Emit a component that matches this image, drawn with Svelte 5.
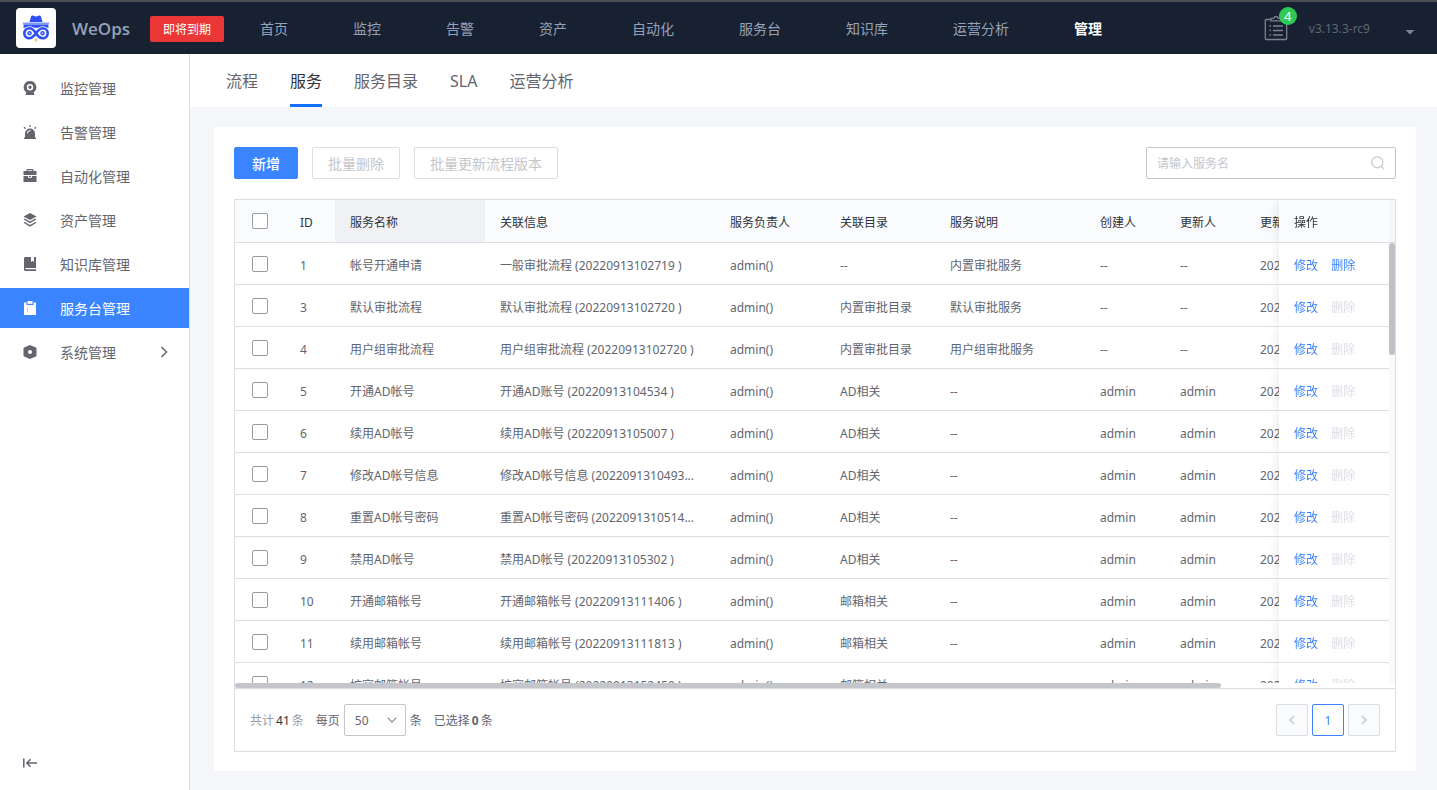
<script>
    const navItems = ["首页", "监控", "告警", "资产", "自动化", "服务台", "知识库", "运营分析", "管理"];
    const tabs = ["流程", "服务", "服务目录", "SLA", "运营分析"];
    const menus = [
        { icon: "monitor", name: "监控管理" },
        { icon: "alarm", name: "告警管理" },
        { icon: "auto", name: "自动化管理" },
        { icon: "asset", name: "资产管理" },
        { icon: "book", name: "知识库管理" },
        { icon: "desk", name: "服务台管理" },
        { icon: "system", name: "系统管理", children: true }
    ];

    let activeNav = "管理";
    let activeTab = "服务";
    let activeMenu = "服务台管理";
    let keyword = "";
    let pageSize = 50;
    let selected = [];

    const rows = [
        { id: 1, name: "帐号开通申请", flow: "一般审批流程 (20220913102719 )", catalog: "--", desc: "内置审批服务", user: "--", removable: true },
        { id: 3, name: "默认审批流程", flow: "默认审批流程 (20220913102720 )", catalog: "内置审批目录", desc: "默认审批服务", user: "--" },
        { id: 4, name: "用户组审批流程", flow: "用户组审批流程 (20220913102720 )", catalog: "内置审批目录", desc: "用户组审批服务", user: "--" },
        { id: 5, name: "开通AD帐号", flow: "开通AD账号 (20220913104534 )", catalog: "AD相关", desc: "--", user: "admin" },
        { id: 6, name: "续用AD帐号", flow: "续用AD帐号 (20220913105007 )", catalog: "AD相关", desc: "--", user: "admin" },
        { id: 7, name: "修改AD帐号信息", flow: "修改AD帐号信息 (2022091310493...", catalog: "AD相关", desc: "--", user: "admin" },
        { id: 8, name: "重置AD帐号密码", flow: "重置AD帐号密码 (2022091310514...", catalog: "AD相关", desc: "--", user: "admin" },
        { id: 9, name: "禁用AD帐号", flow: "禁用AD帐号 (20220913105302 )", catalog: "AD相关", desc: "--", user: "admin" },
        { id: 10, name: "开通邮箱帐号", flow: "开通邮箱帐号 (20220913111406 )", catalog: "邮箱相关", desc: "--", user: "admin" },
        { id: 11, name: "续用邮箱帐号", flow: "续用邮箱帐号 (20220913111813 )", catalog: "邮箱相关", desc: "--", user: "admin" },
        { id: 12, name: "扩容邮箱帐号", flow: "扩容邮箱帐号 (20220913152450 )", catalog: "邮箱相关", desc: "--", user: "admin" }
    ];

    $: list = rows.filter((row) => row.name.includes(keyword));
    $: allChecked = list.length > 0 && selected.length === list.length;

    function toggleAll() {
        selected = allChecked ? [] : list.map((row) => row.id);
    }
</script>

<div class="app">
    <header class="topbar">
        <div class="logo">
            <svg width="28" height="28" viewBox="0 0 28 28">
                <path d="M7.500 8 9 2.600c.4-1.300 1.600-1.500 2.500-.9 1.600 1 3.400 1 5 0 .9-.6 2.100-.4 2.500.9L20.500 8z" fill="#2c50f5" />
                <path d="M1 8.500h26v2.300H1z" fill="#8098fa" />
                <path d="M2 10.800h24l.8 3H1.200z" fill="#2c50f5" />
                <path d="M14 19.200c-2-3.200-4-5-6.700-5a5 5 0 0 0 0 10c5.700 0 7.700-10 13.400-10a5 5 0 0 1 0 10c-2.700 0-4.700-1.800-6.700-5z" fill="#fff" stroke="#fff" stroke-width="4" />
                <path d="M14 19.200c-2-3.200-4-5-6.700-5a5 5 0 0 0 0 10c5.700 0 7.700-10 13.400-10a5 5 0 0 1 0 10c-2.700 0-4.700-1.800-6.700-5z" fill="none" stroke="#2c50f5" stroke-width="2.600" />
                <circle cx="7.500" cy="19.200" r="1.500" fill="none" stroke="#2c50f5" stroke-width="1.500" />
                <circle cx="20.500" cy="19.200" r="1.500" fill="none" stroke="#2c50f5" stroke-width="1.500" />
                <path d="m14 24 .8 1.500 1.500.5-1.500.6L14 28l-.8-1.400-1.500-.6 1.500-.5z" fill="#f7b55b" />
            </svg>
        </div>
        <span class="brand">WeOps</span>
        <span class="expire">即将到期</span>
        <nav class="nav">
            {#each navItems as item}
                <a href="#top" class:active={item === activeNav} on:click|preventDefault={() => (activeNav = item)}>{item}</a>
            {/each}
        </nav>
        <button class="todo" aria-label="待办">
            <svg width="24" height="28" viewBox="0 0 24 28" fill="none" stroke="#7b828d" stroke-width="1.300">
                <path d="M7 5.500H2q-.7 0-.7.700v18.600q0 .7.700.7h20q.7 0 .7-.7V6.200q0-.7-.7-.7h-5" />
                <path d="M7 6.800V4.300h2.800c.3-2.400 4.100-2.400 4.400 0H17v2.500z" />
                <path d="M5.500 12h1.500M9 12h10M5.500 16.500h1.500M9 16.500h10M5.500 21h1.500M9 21h10" />
            </svg>
            <span class="badge">4</span>
        </button>
        <span class="version">v3.13.3-rc9</span>
        <button class="caret" aria-label="展开"></button>
    </header>

    <div class="body">
        <aside class="sidebar">
            {#each menus as menu}
                <button class="menu" class:active={menu.name === activeMenu} on:click={() => (activeMenu = menu.name)}>
                    <svg width="14" height="14" viewBox="0 0 14 14" fill="currentColor">
                        {#if menu.icon === "monitor"}
                            <path fill-rule="evenodd" d="M7 0a6.300 6.300 0 0 1 3.700 11.400L11.500 14h-9l.8-2.600A6.300 6.300 0 0 1 7 0zm0 3a3.200 3.200 0 1 0 0 6.400A3.200 3.200 0 0 0 7 3zm0 1.500a1.700 1.700 0 1 1 0 3.400 1.700 1.700 0 0 1 0-3.400z" />
                        {:else if menu.icon === "alarm"}
                            <path fill-rule="evenodd" d="M1 12.500h1v-4a5 5 0 0 1 10 0v4h1V14H1zM4 8.500h1C5 7 6 6 7.500 6V5C5.500 5 4 6.500 4 8.500z" />
                            <path d="M6.400 0h1.200v2H6.400zM.5 2.700l1-.9 1.500 1.400-1 .9zM13.500 2.700l-1-.9L11 3.200l1 .9z" />
                        {:else if menu.icon === "auto"}
                            <path fill-rule="evenodd" d="M3.500 2V1.300C3.500.5 4 0 4.800 0h4.400c.8 0 1.300.5 1.300 1.300V2h3v4H.500V2zm1.300 0h4.400v-.8H4.800z" />
                            <path d="M.5 7H5v1.800h4V7h4.500v6H.500z" />
                            <path d="M6 7h2v1H6z" />
                        {:else if menu.icon === "asset"}
                            <path d="m7 0 6.500 3.500L7 7 .5 3.500z" />
                            <path d="m.5 6.200 1.200-.6L7 8.500l5.300-2.900 1.200.6L7 10.200zM.5 9.700l1.200-.6L7 12l5.300-2.900 1.200.6L7 13.700z" />
                        {:else if menu.icon === "book"}
                            <path d="M2.500 0H8v5l1.500-1.200L11 5V0h2v11H3c-1 0-1 1.300 0 1.300h10V14H2.500C1.500 14 1 13.300 1 12.500v-11C1 .7 1.600 0 2.500 0z" />
                        {:else if menu.icon === "desk"}
                            <path d="M1 1.500h2.500V4h7V1.500H13V14H1z" />
                            <path d="M4.500 0h5v2.800h-5z" />
                            <path d="M4 6.500h.7v5H4z" fill="#3a84ff" opacity=".6" />
                        {:else}
                            <path fill-rule="evenodd" d="m7 0 5.800 2.600c.4.2.7.500.7 1v6.800c0 .5-.3.800-.7 1L7 14l-5.800-2.600c-.4-.2-.7-.5-.7-1V3.600c0-.5.3-.8.7-1zm0 5a2 2 0 1 0 0 4 2 2 0 0 0 0-4z" />
                        {/if}
                    </svg>
                    <span>{menu.name}</span>
                    {#if menu.children}
                        <svg class="arrow" width="8" height="12" viewBox="0 0 8 12" fill="none" stroke="currentColor" stroke-width="1.500">
                            <path d="m1.500 1 5 5-5 5" />
                        </svg>
                    {/if}
                </button>
            {/each}
            <button class="collapse" aria-label="收起">
                <svg width="14" height="10" viewBox="0 0 14 10" fill="none" stroke="currentColor" stroke-width="1.500">
                    <path d="M.8.500v9M14 5H4M7.500 1.200 3.800 5l3.700 3.800" />
                </svg>
            </button>
        </aside>

        <main class="main">
            <nav class="tabs">
                {#each tabs as tab}
                    <button class:active={tab === activeTab} on:click={() => (activeTab = tab)}>{tab}</button>
                {/each}
            </nav>

            <section class="card">
                <div class="toolbar">
                    <button class="btn primary">新增</button>
                    <button class="btn" disabled>批量删除</button>
                    <button class="btn" disabled>批量更新流程版本</button>
                    <div class="search">
                        <input type="text" placeholder="请输入服务名" aria-label="服务名" bind:value={keyword} />
                        <svg width="14" height="14" viewBox="0 0 14 14" fill="none" stroke="#c4c6cc" stroke-width="1.200">
                            <circle cx="6.300" cy="6.300" r="5.500" />
                            <path d="m10.300 10.300 2.900 2.900" />
                        </svg>
                    </div>
                </div>

                <div class="table-box">
                    <div class="table-area">
                        <div class="scroller">
                            <table>
                                <colgroup>
                                    <col class="w50" />
                                    <col class="w50" />
                                    <col class="w150" />
                                    <col class="w230" />
                                    <col class="w110" />
                                    <col class="w110" />
                                    <col class="w150" />
                                    <col class="w80" />
                                    <col class="w80" />
                                    <col />
                                    <col class="w110" />
                                </colgroup>
                                <thead>
                                    <tr>
                                        <th class="check"><input type="checkbox" aria-label="全选" checked={allChecked} on:change={toggleAll} /></th>
                                        <th>ID</th>
                                        <th class="hovered">服务名称</th>
                                        <th>关联信息</th>
                                        <th>服务负责人</th>
                                        <th>关联目录</th>
                                        <th>服务说明</th>
                                        <th>创建人</th>
                                        <th>更新人</th>
                                        <th>更新时间</th>
                                        <th class="fixed">操作</th>
                                    </tr>
                                </thead>
                                <tbody>
                                    {#each list as row (row.id)}
                                        <tr>
                                            <td class="check"><input type="checkbox" aria-label={row.name} value={row.id} bind:group={selected} /></td>
                                            <td>{row.id}</td>
                                            <td>{row.name}</td>
                                            <td>{row.flow}</td>
                                            <td>admin()</td>
                                            <td>{row.catalog}</td>
                                            <td>{row.desc}</td>
                                            <td>{row.user}</td>
                                            <td>{row.user}</td>
                                            <td>2022-09-13</td>
                                            <td class="fixed">
                                                <button class="link">修改</button>
                                                <button class="link" disabled={!row.removable}>删除</button>
                                            </td>
                                        </tr>
                                    {/each}
                                </tbody>
                            </table>
                        </div>
                        <div class="gutter">
                            <div class="gutter-head"></div>
                            <div class="track"><div class="thumb-y"></div></div>
                        </div>
                    </div>
                    <div class="track-x"><div class="thumb-x"></div></div>

                    <div class="footer">
                        <span class="total">共计<b>41</b>条</span>
                        <label class="size">
                            每页
                            <span class="select">
                                <select bind:value={pageSize}>
                                    <option value={10}>10</option>
                                    <option value={20}>20</option>
                                    <option value={50}>50</option>
                                </select>
                                <svg width="10" height="6" viewBox="0 0 10 6" fill="none" stroke="#979ba5" stroke-width="1.300">
                                    <path d="m.7.7 4.300 4.300L9.300.7" />
                                </svg>
                            </span>
                            条
                        </label>
                        <span class="picked">已选择<b>{selected.length}</b>条</span>
                        <div class="pager">
                            <button disabled aria-label="上一页">
                                <svg width="6" height="10" viewBox="0 0 6 10" fill="none" stroke="currentColor" stroke-width="1.500"><path d="M5 1 1 5l4 4" /></svg>
                            </button>
                            <button class="current">1</button>
                            <button disabled aria-label="下一页">
                                <svg width="6" height="10" viewBox="0 0 6 10" fill="none" stroke="currentColor" stroke-width="1.500"><path d="m1 1 4 4-4 4" /></svg>
                            </button>
                        </div>
                    </div>
                </div>
            </section>
        </main>
    </div>
</div>

<style>
    :global(body) {
        margin: 0;
    }

    .app {
        display: flex;
        flex-direction: column;
        height: 100vh;
        font-family: "Noto Sans", "Noto Sans CJK SC", sans-serif;
        font-size: 12px;
        line-height: 21px;
        color: #63656e;
        background: #f5f6fa;
    }

    .app :global(*) {
        box-sizing: border-box;
    }

    button,
    input,
    select {
        font: inherit;
        color: inherit;
        margin: 0;
    }

    button {
        padding: 0;
        border: none;
        background: none;
        cursor: pointer;
    }

    button:disabled {
        cursor: not-allowed;
    }

    svg {
        display: block;
        flex: none;
    }

    .topbar {
        display: flex;
        align-items: center;
        flex: none;
        height: 54px;
        padding: 0 22px 0 16px;
        background: #182132;
        border-top: 2px solid #4c4d52;
        white-space: nowrap;
    }

    .logo {
        display: flex;
        align-items: center;
        justify-content: center;
        width: 40px;
        height: 40px;
        background: #fff;
        border-radius: 4px;
    }

    .brand {
        width: 78px;
        padding-left: 16px;
        font-family: "Open Sans", sans-serif;
        font-size: 17px;
        font-weight: 600;
        color: #96a2b9;
    }

    .expire {
        margin: 2px 0 0 16px;
        padding: 1px 13px 0;
        line-height: 25px;
        color: #fff;
        background: #ea3636;
        border-radius: 2px;
    }

    .nav {
        display: flex;
        gap: 65px;
        flex: 1;
        margin-left: 36px;
        padding-top: 1px;
        font-size: 14px;
    }

    .nav a {
        color: #96a2b9;
        text-decoration: none;
    }

    .nav a.active {
        color: #fff;
        font-weight: bold;
    }

    .todo {
        position: relative;
    }

    .badge {
        position: absolute;
        top: -7px;
        right: -9px;
        width: 18px;
        line-height: 18px;
        border-radius: 50%;
        background: #2dcb56;
        color: #fff;
        font-size: 13px;
        text-align: center;
    }

    .version {
        margin: 0 35px 0 21px;
        padding-top: 1px;
        color: #63656e;
    }

    .caret {
        width: 10px;
        height: 5px;
        margin-top: 8px;
        background: #7b828d;
        clip-path: polygon(0 0, 100% 0, 50% 100%);
    }

    .body {
        display: flex;
        flex: 1;
        min-height: 0;
    }

    .sidebar {
        display: flex;
        flex-direction: column;
        gap: 4px;
        flex: none;
        width: 190px;
        padding-top: 14px;
        background: #fff;
        border-right: 1px solid #dcdee5;
    }

    .menu {
        display: flex;
        align-items: center;
        gap: 23px;
        height: 40px;
        padding: 0 21px 0 23px;
        font-size: 14px;
    }

    .menu span {
        padding-top: 1px;
    }

    .menu.active {
        color: #fff;
        background: #3a84ff;
    }

    .arrow {
        margin-left: auto;
    }

    .collapse {
        width: 14px;
        margin: auto 0 22px 23px;
    }

    .main {
        display: flex;
        flex-direction: column;
        flex: 1;
        min-width: 0;
    }

    .tabs {
        display: flex;
        gap: 32px;
        flex: none;
        height: 53px;
        padding: 0 36px;
        background: #fff;
    }

    .tabs button {
        padding-top: 4px;
        font-size: 16px;
        border-bottom: 3px solid transparent;
    }

    .tabs button.active {
        color: #313238;
        border-color: #1272ff;
    }

    .card {
        display: flex;
        flex-direction: column;
        gap: 20px;
        flex: 1;
        min-height: 0;
        margin: 20px 21px 19px 24px;
        padding: 20px 20px 19px;
        background: #fff;
    }

    .toolbar {
        display: flex;
        gap: 14px;
    }

    .btn {
        height: 32px;
        padding: 0 15px;
        font-size: 14px;
        border: 1px solid #dcdee5;
        border-radius: 2px;
        white-space: nowrap;
    }

    .btn:disabled {
        color: #c4c6cc;
    }

    .btn.primary {
        padding: 0 17px;
        font-weight: 500;
        color: #fff;
        background: #3a84ff;
        border-color: #3a84ff;
    }

    .search {
        display: flex;
        align-items: center;
        width: 250px;
        height: 32px;
        margin-left: auto;
        padding: 0 10px;
        border: 1px solid #c4c6cc;
        border-radius: 2px;
    }

    .search input {
        flex: 1;
        min-width: 0;
        padding: 1px 0 0;
        border: none;
        outline: none;
        background: none;
    }

    .search input::placeholder {
        color: #c4c6cc;
        opacity: 1;
    }

    .table-box {
        display: flex;
        flex-direction: column;
        flex: 1;
        min-height: 0;
        border: 1px solid #dcdee5;
    }

    .table-area {
        display: flex;
        flex: 1;
        min-height: 0;
    }

    .scroller {
        flex: 1;
        min-width: 0;
        overflow: auto;
        scrollbar-width: none;
    }

    table {
        width: 100%;
        min-width: 1366px;
        table-layout: fixed;
        border-collapse: separate;
        border-spacing: 0;
    }

    .w50 {
        width: 50px;
    }

    .w80 {
        width: 80px;
    }

    .w110 {
        width: 110px;
    }

    .w150 {
        width: 150px;
    }

    .w230 {
        width: 230px;
    }

    th,
    td {
        height: 42px;
        padding: 2px 15px 0;
        text-align: left;
        font-weight: normal;
        border-bottom: 1px solid #dcdee5;
        white-space: nowrap;
        overflow: hidden;
        text-overflow: ellipsis;
    }

    td {
        padding-top: 3px;
    }

    th {
        position: sticky;
        top: 0;
        z-index: 2;
        height: 43px;
        color: #313238;
        background: #fafbfd;
    }

    th.hovered {
        background: #f0f1f5;
    }

    .check {
        padding: 0;
        text-align: center;
    }

    .check input {
        appearance: none;
        display: block;
        width: 16px;
        height: 16px;
        margin: 0 auto;
        border: 1px solid #979ba5;
        border-radius: 2px;
        background: #fff;
    }

    .check input:checked {
        border-color: #3a84ff;
        background: #3a84ff;
    }

    .fixed {
        position: sticky;
        right: 0;
        z-index: 1;
        background: #fff;
        box-shadow: 0 0 10px rgba(0, 0, 0, 0.12);
        overflow: visible;
        clip-path: inset(0 0 0 -12px);
    }

    th.fixed {
        z-index: 3;
        background: #fafbfd;
    }

    .link {
        margin-right: 10px;
        color: #3a84ff;
    }

    .link + .link {
        margin-right: 0;
    }

    .link:disabled {
        color: #dcdee5;
    }

    .gutter {
        display: flex;
        flex-direction: column;
        width: 6px;
    }

    .gutter-head {
        height: 43px;
        background: #f5f6fa;
        border-bottom: 1px solid #dcdee5;
    }

    .track {
        flex: 1;
        background: #fafafa;
    }

    .thumb-y {
        height: 112px;
        border-radius: 3px;
        background: #c0c1c6;
    }

    .track-x {
        flex: none;
        height: 5px;
    }

    .thumb-x {
        width: 85%;
        height: 5px;
        border-radius: 3px;
        background: #c4c6cc;
    }

    .footer {
        display: flex;
        align-items: center;
        flex: none;
        height: 63px;
        padding: 0 15px;
        border-top: 1px solid #dcdee5;
    }

    .total {
        color: #979ba5;
    }

    .total b {
        margin: 0 2px;
        font-weight: normal;
        color: #313238;
    }

    .size {
        display: flex;
        align-items: center;
        gap: 4px;
        margin: 0 12px;
    }

    .select {
        position: relative;
        display: flex;
    }

    .select select {
        appearance: none;
        width: 62px;
        height: 32px;
        padding: 0 10px;
        border: 1px solid #c4c6cc;
        border-radius: 2px;
        background: #fff;
    }

    .select svg {
        position: absolute;
        top: 13px;
        right: 9px;
        pointer-events: none;
    }

    .picked b {
        margin: 0 2px;
    }

    .pager {
        display: flex;
        gap: 4px;
        margin-left: auto;
    }

    .pager button {
        display: flex;
        align-items: center;
        justify-content: center;
        width: 32px;
        height: 32px;
        border: 1px solid #dcdee5;
        border-radius: 2px;
        background: #fafbfd;
        color: #c4c6cc;
    }

    .pager .current {
        color: #3a84ff;
        background: #fff;
        border-color: #3a84ff;
    }
</style>
